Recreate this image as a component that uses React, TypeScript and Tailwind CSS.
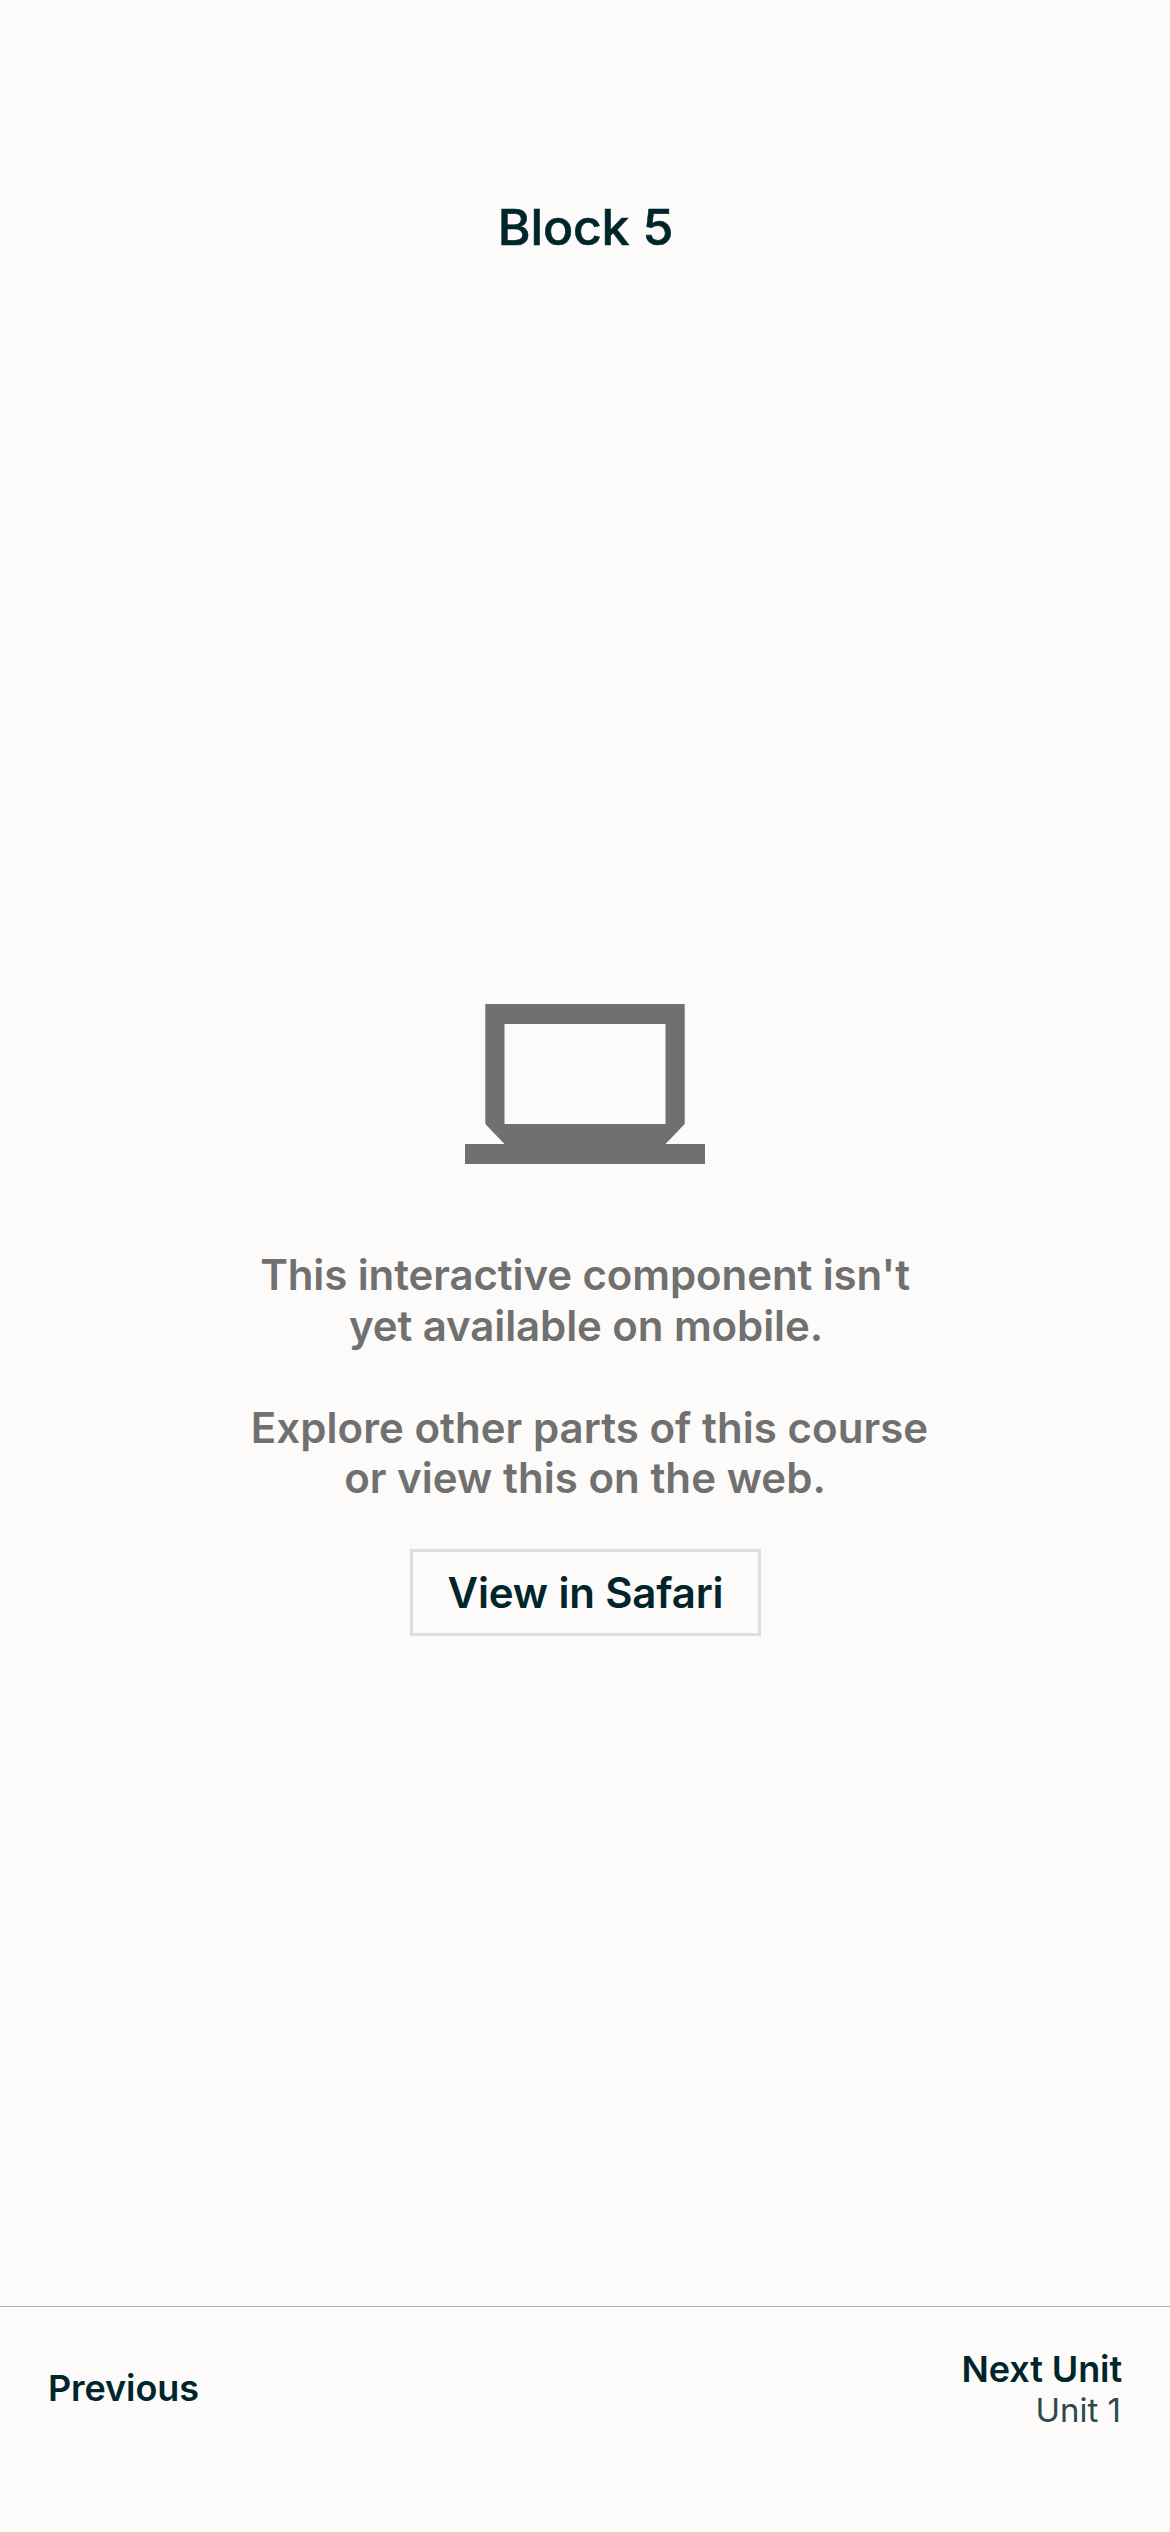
export default function App() {
  return (
    <main className="flex h-[2532px] w-[1170px] flex-col bg-[#fcfbf9] font-['Inter',sans-serif] text-[#00262b]">
      <header className="flex h-[300px] items-start justify-center pt-[196px]">
        <h1 className="pl-px text-[50px] leading-[62px] font-medium tracking-[-0.2px] [-webkit-text-stroke:0.6px_#00262b]">Block 5</h1>
      </header>
      <section className="flex flex-1 flex-col items-center pt-[704px]">
        <svg className="h-[160px] w-[240px]" viewBox="0 0 240 160" fill="#707070" aria-hidden="true">
          <path fillRule="evenodd" d="M20.3 0H219.7V120L200.5 140H240V160H0V140H39.5L20.3 120ZM39.5 20V120H200.5V20Z" />
        </svg>
        <div className="mt-[86px] flex flex-col items-center text-[42px] leading-[50.6px] font-semibold tracking-[-0.1px] whitespace-nowrap text-[#707070]">
          <p>This interactive component isn't</p>
          <p className="pl-0.5">yet available on mobile.</p>
        </div>
        <div className="mt-[51.8px] flex flex-col items-center text-[42px] leading-[50px] font-semibold tracking-[0.04px] whitespace-nowrap text-[#707070]">
          <p className="pl-[9px]">Explore other parts of this course</p>
          <p>or view this on the web.</p>
        </div>
        <button className="mt-[46px] ml-px flex h-[87px] w-[351px] items-center justify-center border-3 border-[#e0dedc] text-[42px] font-semibold tracking-[-0.16px]">View in Safari</button>
      </section>
      <footer className="flex h-[226px] justify-between border-t border-[#afafad] px-12">
        <button className="mt-[58px] h-[46px] text-[36px] leading-[46px] font-semibold tracking-[-0.1px]">Previous</button>
        <div className="mt-[40px] flex flex-col items-end">
          <span className="text-[36px] leading-[44px] font-semibold tracking-[-0.1px]">Next Unit</span>
          <span className="-mt-px pr-px text-[33px] leading-[40px] font-normal text-[#2c4a4e]">Unit 1</span>
        </div>
      </footer>
    </main>
  );
}
